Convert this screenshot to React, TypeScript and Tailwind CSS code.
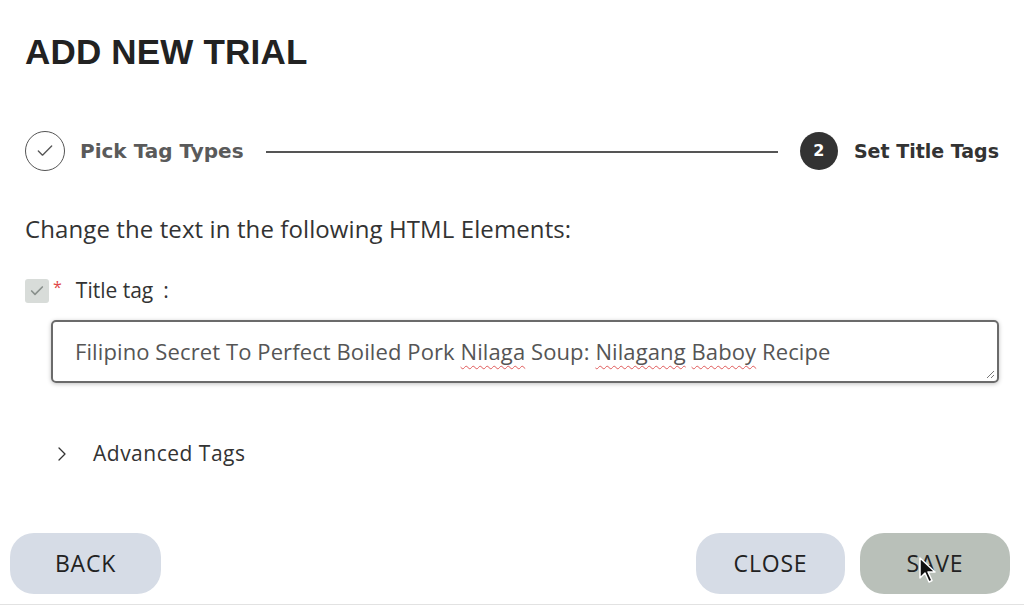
import { Check, ChevronRight } from 'lucide-react';

function Squiggle({ children }: { children: string }) {
    return (
        <span className="underline decoration-wavy decoration-[#e05a5a] decoration-1 underline-offset-[5px]">{children}</span>
    );
}

function Cursor() {
    return (
        <svg className="absolute left-[918px] top-[556px] pointer-events-none" width="20" height="28" viewBox="0 0 20 28">
            <path d="M2 2 L2 22 L7 17 L11 26 L14 24.5 L10 16 L17 16 Z" fill="#111" stroke="#fff" strokeWidth="1.5" strokeLinejoin="round" />
        </svg>
    );
}

export default function App() {
    return (
        <div className="relative w-[1024px] h-[608px] bg-white overflow-hidden flex flex-col text-[#2b2b2b]" style={{ fontFamily: '"Open Sans", sans-serif' }}>
            <div className="flex flex-col px-[25px] pt-[30px]">
                {/* Header */}
                <h1 className="text-[35px] leading-[44px] font-bold tracking-[0.2px] text-[#222]" style={{ fontFamily: '"Liberation Sans", sans-serif' }}>
                    ADD NEW TRIAL
                </h1>

                {/* Steps */}
                <div className="mt-[56px] flex items-center h-[42px]" style={{ fontFamily: '"DejaVu Sans", sans-serif' }}>
                    <div className="flex h-[40px] w-[40px] items-center justify-center rounded-full border-[1.5px] border-[#555]">
                        <Check className="h-[20px] w-[20px] text-[#555]" strokeWidth={1.6} />
                    </div>
                    <span className="ml-[15px] text-[20px] font-bold text-[#5a5a5a]">Pick Tag Types</span>
                    <div className="mx-[22px] h-[2px] flex-1 bg-[#555] mt-[2px]" />
                    <div className="flex h-[38px] w-[38px] items-center justify-center rounded-full bg-[#333] text-white text-[16px] font-bold">
                        2
                    </div>
                    <span className="ml-[16px] text-[19px] font-bold text-[#333]">Set Title Tags</span>
                </div>

                <p className="mt-[42px] text-[24px] leading-[30px] tracking-[0.1px] text-[#333]">Change the text in the following HTML Elements:</p>

                {/* Title tag */}
                <div className="mt-[33px] flex items-center h-[28px]">
                    <div className="flex h-[24px] w-[24px] items-center justify-center rounded-[3px] bg-[#d8dcd9]">
                        <Check className="h-[16px] w-[16px] text-[#8a918d]" strokeWidth={2.5} />
                    </div>
                    <span className="ml-[4px] self-start text-[16px] leading-[20px] text-[#e04848]">*</span>
                    <span className="ml-[14px] text-[21px] text-[#333]">Title tag</span>
                    <span className="ml-[10px] text-[21px] text-[#333]">:</span>
                </div>

                <div className="relative mt-[15px] ml-[26px] h-[63px] rounded-[5px] border-2 border-[#6b6b6b] shadow-[0_1px_4px_rgba(0,0,0,0.25)] flex items-center px-[22px]">
                    <span className="text-[22px] tracking-[0.1px] text-[#555]">
                        Filipino Secret To Perfect Boiled Pork <Squiggle>Nilaga</Squiggle> Soup: <Squiggle>Nilagang</Squiggle> <Squiggle>Baboy</Squiggle> Recipe
                    </span>
                    <svg className="absolute right-[2px] bottom-[2px]" width="10" height="10" viewBox="0 0 10 10">
                        <path d="M9 2 L2 9 M9 6 L6 9" stroke="#777" strokeWidth="1" />
                    </svg>
                </div>

                {/* Advanced */}
                <div className="mt-[56px] flex items-center h-[30px]">
                    <ChevronRight className="ml-[25px] h-[24px] w-[24px] text-[#333]" strokeWidth={1.3} />
                    <span className="ml-[19px] text-[21px] tracking-[0.5px] text-[#333]">Advanced Tags</span>
                </div>
            </div>

            {/* Footer */}
            <div className="mt-auto mb-[10px] flex items-center pl-[10px] pr-[14px]">
                <button className="h-[61px] w-[151px] rounded-[24px] bg-[#d6dce6] text-[23px] tracking-[0.8px] text-[#222]">BACK</button>
                <div className="flex-1" />
                <button className="h-[61px] w-[149px] rounded-[24px] bg-[#d6dce6] text-[23px] tracking-[0.8px] text-[#222]">CLOSE</button>
                <button className="ml-[15px] h-[61px] w-[150px] rounded-[24px] bg-[#b9c0b9] text-[23px] tracking-[0.8px] text-[#222]">SAVE</button>
            </div>
            <div className="h-px bg-[#e2e2e2] mb-[3px]" />

            <Cursor />
        </div>
    );
}
